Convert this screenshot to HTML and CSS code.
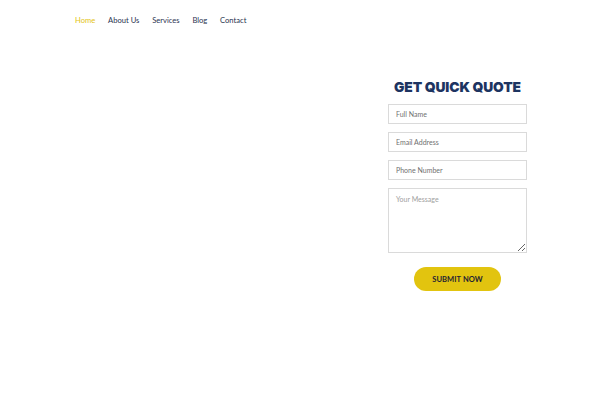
FILE: index.html
```html
<!DOCTYPE html>
<html>
<head>
<meta charset="utf-8">
<link rel="stylesheet" href="styles.css">
</head>
<body>
<header class="nav">
  <a class="nav-link active" href="#">Home</a>
  <a class="nav-link" href="#">About Us</a>
  <a class="nav-link" href="#">Services</a>
  <a class="nav-link" href="#">Blog</a>
  <a class="nav-link" href="#">Contact</a>
</header>
<main class="hero">
  <div class="hero-left"></div>
  <form class="quote">
    <h2 class="quote-title">GET QUICK QUOTE</h2>
    <input class="field" type="text" placeholder="Full Name">
    <input class="field" type="text" placeholder="Email Address">
    <input class="field" type="text" placeholder="Phone Number">
    <textarea class="field area" placeholder="Your Message"></textarea>
    <button class="submit" type="button">SUBMIT NOW</button>
  </form>
</main>
</body>
</html>
```
FILE: styles.css
```css
* { box-sizing: border-box; }
html, body { margin: 0; padding: 0; background: #fff; }
body { width: 600px; height: 400px; overflow: hidden; font-family: Lato, "Open Sans", sans-serif; }
.nav { display: flex; padding: 15px 0 0 75px; height: 30px; align-items: flex-start; }
.nav-link { font-size: 7.6px; line-height: 10px; color: #2a3350; text-decoration: none; margin-right: 12.8px; font-weight: 400; }
.nav-link.active { color: #e3c314; }
.hero { display: flex; justify-content: flex-end; padding: 48px 73px 0 0; }
.hero-left { flex: 1; }
.quote { width: 139px; display: flex; flex-direction: column; align-items: stretch; }
.quote-title { margin: 0 0 8px 0; text-align: center; font-family: Inter, sans-serif; font-weight: 900; font-size: 13.8px; line-height: 18px; color: #1d3461; letter-spacing: -0.1px; white-space: nowrap; }
.field { display: block; width: 139px; height: 20px; margin: 0 0 8px 0; border: 1px solid #dadada; padding: 0 7px; font-family: Lato, sans-serif; font-size: 7px; color: #555; background: #fff; outline: none; }
.field::placeholder { color: #707070; }
.area { height: 65px; padding-top: 6px; resize: vertical; }
.area::placeholder { color: #a0a0a0; }
.submit { align-self: center; margin-top: 6px; width: 87px; height: 24px; border: none; border-radius: 12px; background: #e2c40f; color: #1e2233; font-family: Lato, sans-serif; font-weight: 700; font-size: 7.5px; letter-spacing: 0.1px; }
```
